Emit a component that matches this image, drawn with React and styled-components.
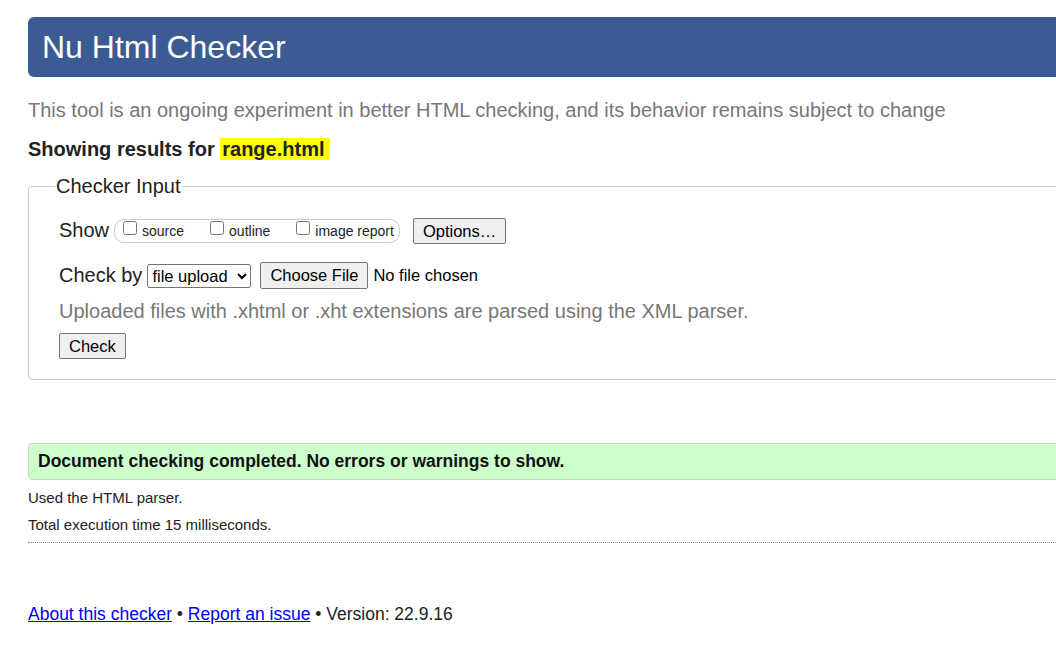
import styled, { createGlobalStyle } from "styled-components";

const GlobalStyle = createGlobalStyle`
    html, body{
        margin: 0;
        padding: 0;
        background: #fff;
        overflow: hidden;
    }
    body{
        font-family: "Liberation Sans", Arial, sans-serif;
        color: #222;
    }
`

const StyledPage = styled.div`
    width: 1120px;
    padding: 17px 0 40px 28px;
`

const StyledHeader = styled.h1`
    margin: 0;
    background-color: #3b5b92;
    color: #fff;
    font-weight: normal;
    font-size: 32px;
    line-height: 60px;
    height: 60px;
    padding: 0 14px;
    border-radius: 6px;
`

const StyledIntro = styled.p`
    margin: 21px 0 0;
    color: #777;
    font-size: 20px;
    line-height: 24px;
`

const StyledShowing = styled.p`
    margin: 12px 0 0;
    font-size: 20px;
    font-weight: bold;
    line-height: 30px;
    color: #222;

    span{
        background-color: #ffff00;
        padding: 0 5px 0 2px;
    }
`

const StyledFieldset = styled.fieldset`
    margin: 11px 0 0;
    padding: 14px 30px 20px;
    border: 1px solid #ccc;
    border-radius: 4px;

    legend{
        font-size: 20px;
        padding: 0 1px;
        margin-left: -4px;
        color: #222;
    }
`

const StyledRow = styled.div`
    display: flex;
    align-items: center;
    font-size: 20px;
    color: #222;
    margin-top: ${({top}) => top || 0}px;
`

const StyledLabel = styled.span`
    margin-right: 5px;
`

const StyledOptionsGroup = styled.span`
    display: inline-flex;
    align-items: center;
    height: 22px;
    border: 1px solid #ccc;
    border-radius: 10px;
    padding: 0 5px 0 4px;
    margin: 2px 13px 0 0;
    gap: 22px;

    label{
        display: inline-flex;
        align-items: center;
        font-size: 14px;
        line-height: 16px;
        color: #222;
    }

    input{
        margin: 0 5px 0 4px;
        width: 14px;
        height: 14px;
        position: relative;
        top: -3px;
    }
`

const StyledButton = styled.button`
    font-family: "Liberation Sans", Arial, sans-serif;
    font-size: 16.5px;
    padding: 3px 9px;
    height: 26px;
    line-height: 18px;
    background: #efefef;
    border: 1px solid #767676;
    border-radius: 2px;
    color: #000;
    margin-top: ${({top}) => top || 0}px;
`

const StyledSelect = styled.select`
    font-family: "Liberation Sans", Arial, sans-serif;
    font-size: 16.5px;
    height: 24px;
    width: 104px;
    margin-right: 9px;
    color: #000;
    border: 1px solid #767676;
    border-radius: 2px;
    background: #fff;
`

const StyledFileInput = styled.input`
    font-family: "Liberation Sans", Arial, sans-serif;
    font-size: 16.5px;
    color: #000;

    &::file-selector-button{
        font-family: "Liberation Sans", Arial, sans-serif;
        font-size: 16.5px;
        height: 27px;
        padding: 0 9px;
        margin-right: 5px;
        background: #efefef;
        border: 1px solid #767676;
        border-radius: 2px;
        color: #000;
    }
`

const StyledNote = styled.p`
    margin: 10px 0 0;
    color: #777;
    font-size: 20px;
    line-height: 24px;
`

const StyledSuccess = styled.div`
    margin-top: 63px;
    background-color: #ccffcc;
    border: 1px solid #c2dcc2;
    border-radius: 4px;
    padding: 0 9px;
    height: 35px;
    line-height: 35px;
    font-weight: bold;
    font-size: 17.5px;
    color: #111;
`

const StyledDetails = styled.div`
    margin-top: 4px;
    padding-bottom: 4px;
    border-bottom: 1px dotted #888;
    font-size: 15px;
    color: #222;

    p{
        margin: 0;
        line-height: 27px;
    }
`

const StyledFooter = styled.p`
    margin: 61px 0 0;
    font-size: 17.5px;
    color: #222;

    a{
        color: #0000ee;
        text-decoration: underline;
    }
`

function App(){
    return (
        <StyledPage>
            <GlobalStyle />
            <StyledHeader>Nu Html Checker</StyledHeader>
            <StyledIntro>This tool is an ongoing experiment in better HTML checking, and its behavior remains subject to change</StyledIntro>
            <StyledShowing>Showing results for <span>range.html</span></StyledShowing>
            <StyledFieldset>
                <legend>Checker Input</legend>
                <StyledRow top={4}>
                    <StyledLabel>Show</StyledLabel>
                    <StyledOptionsGroup>
                        <label><input type="checkbox" />source</label>
                        <label><input type="checkbox" />outline</label>
                        <label><input type="checkbox" />image report</label>
                    </StyledOptionsGroup>
                    <StyledButton top={2}>Options…</StyledButton>
                </StyledRow>
                <StyledRow top={18}>
                    <StyledLabel>Check by</StyledLabel>
                    <StyledSelect defaultValue="file">
                        <option value="file">file upload</option>
                    </StyledSelect>
                    <StyledFileInput type="file" />
                </StyledRow>
                <StyledNote>Uploaded files with .xhtml or .xht extensions are parsed using the XML parser.</StyledNote>
                <StyledRow top={10}>
                    <StyledButton>Check</StyledButton>
                </StyledRow>
            </StyledFieldset>
            <StyledSuccess>Document checking completed. No errors or warnings to show.</StyledSuccess>
            <StyledDetails>
                <p>Used the HTML parser.</p>
                <p>Total execution time 15 milliseconds.</p>
            </StyledDetails>
            <StyledFooter>
                <a href="#about">About this checker</a> • <a href="#report">Report an issue</a> • Version: 22.9.16
            </StyledFooter>
        </StyledPage>
    )
}

export default App
